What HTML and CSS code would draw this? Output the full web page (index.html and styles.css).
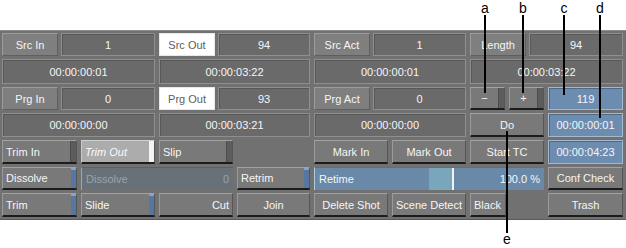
FILE: index.html
```html
<!DOCTYPE html>
<html>
<head>
<meta charset="utf-8">
<link rel="stylesheet" href="styles.css">
</head>
<body>
<div class="page">
  <div class="top-space"></div>
  <div class="panel">
    <!-- row 1 -->
    <div class="grp span2"><div class="lbl">Src In</div><div class="val">1</div></div>
    <div class="grp span2"><div class="lbl white">Src Out</div><div class="val">94</div></div>
    <div class="grp span2"><div class="lbl">Src Act</div><div class="val">1</div></div>
    <div class="grp span2"><div class="lbl">Length</div><div class="val">94</div></div>
    <!-- row 2 -->
    <div class="val span2">00:00:00:01</div>
    <div class="val span2">00:00:03:22</div>
    <div class="val span2">00:00:00:01</div>
    <div class="val span2">00:00:03:22</div>
    <!-- row 3 -->
    <div class="grp span2"><div class="lbl">Prg In</div><div class="val">0</div></div>
    <div class="grp span2"><div class="lbl white">Prg Out</div><div class="val">93</div></div>
    <div class="grp span2"><div class="lbl">Prg Act</div><div class="val">0</div></div>
    <div class="pair">
      <div class="btn center"><span class="txt">−</span><span class="strip dark"></span></div>
      <div class="btn center"><span class="txt">+</span><span class="strip dark"></span></div>
    </div>
    <div class="blue">119</div>
    <!-- row 4 -->
    <div class="val span2">00:00:00:00</div>
    <div class="val span2">00:00:03:21</div>
    <div class="val span2">00:00:00:00</div>
    <div class="btn center"><span class="txt">Do</span></div>
    <div class="blue">00:00:00:01</div>
    <!-- row 5 -->
    <div class="btn"><span class="txt">Trim In</span><span class="strip dark"></span></div>
    <div class="btn active"><span class="txt">Trim Out</span><span class="strip white"></span></div>
    <div class="btn"><span class="txt">Slip</span><span class="strip dark"></span></div>
    <div class="empty"></div>
    <div class="btn center"><span class="txt">Mark In</span></div>
    <div class="btn center"><span class="txt">Mark Out</span></div>
    <div class="btn center"><span class="txt">Start TC</span></div>
    <div class="blue">00:00:04:23</div>
    <!-- row 6 -->
    <div class="btn"><span class="txt">Dissolve</span><span class="strip blue-s"></span></div>
    <div class="slider disabled span2"><span class="s-lbl">Dissolve</span><span class="s-val">0</span></div>
    <div class="btn"><span class="txt">Retrim</span><span class="strip blue-s"></span></div>
    <div class="slider retime span3"><span class="s-lbl">Retime</span><span class="fill"></span><span class="s-val">100.0 %</span></div>
    <div class="btn center"><span class="txt">Conf Check</span></div>
    <!-- row 7 -->
    <div class="btn"><span class="txt">Trim</span><span class="strip blue-s"></span></div>
    <div class="btn"><span class="txt">Slide</span><span class="strip blue-s"></span></div>
    <div class="btn right"><span class="txt">Cut</span></div>
    <div class="btn center"><span class="txt">Join</span></div>
    <div class="btn center"><span class="txt">Delete Shot</span></div>
    <div class="btn center"><span class="txt">Scene Detect</span><span class="strip blue-s"></span></div>
    <div class="pair"><div class="btn"><span class="txt">Black</span></div><div class="empty"></div></div>
    <div class="btn center"><span class="txt">Trash</span></div>
  </div>

  <div class="callout ca"><span class="letter">a</span><span class="line"></span></div>
  <div class="callout cb"><span class="letter">b</span><span class="line"></span></div>
  <div class="callout cc"><span class="letter">c</span><span class="line"></span></div>
  <div class="callout cd"><span class="letter">d</span><span class="line"></span></div>
  <div class="callout ce"><span class="line"></span><span class="letter">e</span></div>
</div>
</body>
</html>
```
FILE: styles.css
```css
html, body {
  margin: 0;
  padding: 0;
  background: #ffffff;
}
.page {
  position: relative;
  width: 626px;
  height: 248px;
  font-family: "Liberation Sans", Arial, sans-serif;
  font-size: 11px;
  color: #f6f6f6;
}
.top-space {
  height: 30px;
}
.panel {
  box-sizing: border-box;
  width: 626px;
  height: 190px;
  background: #717171;
  border-top: 1px solid #8c8c8c;
  border-bottom: 1px solid #5a5a5a;
  padding: 2px 0 0 2px;
  display: grid;
  grid-template-columns: 75px 74px 74px 73px 74px 74px 74px 75px;
  grid-template-rows: 23px 25px 23px 24px 24px 23px 24px;
  column-gap: 4px;
  row-gap: 3px;
}
.span2 { grid-column: span 2; }
.span3 { grid-column: span 3; }

.grp {
  display: flex;
  gap: 3px;
}
.pair {
  display: flex;
  gap: 4px;
}
.pair > * {
  flex: 1;
}
.lbl, .val, .blue {
  box-sizing: border-box;
  display: flex;
  align-items: center;
  justify-content: center;
  white-space: nowrap;
}
.lbl {
  width: 56px;
  flex: none;
  background: #7f7f7f;
  border: 1px solid;
  border-color: #9c9c9c #5f5f5f #5f5f5f #9c9c9c;
}
.lbl.white {
  background: #ffffff;
  color: #5e5e5e;
  border-color: #e8e8e8;
}
.val {
  flex: 1;
  background: #6a6a6a;
  border: 1px solid #8f8f8f;
  box-shadow: inset 1px 1px 0 #585858;
}
.blue {
  background: #6d8db0;
  border: 1px solid #a3b8cd;
  box-shadow: inset 1px 1px 0 #4d6a8a;
}

.btn {
  box-sizing: border-box;
  display: flex;
  align-items: stretch;
  background: #797979;
  border-top: 1px solid #a2a2a2;
  border-left: 1px solid #9a9a9a;
  border-right: 1px solid #555555;
  border-bottom: 2px solid #1c1c1c;
  white-space: nowrap;
  overflow: hidden;
}
.btn .txt {
  flex: 1;
  display: flex;
  align-items: center;
  padding: 0 3px;
}
.btn.center .txt { justify-content: center; }
.btn.right .txt { justify-content: flex-end; }
.btn .strip {
  width: 5px;
  flex: none;
}
.strip.dark {
  background: #5c5c5c;
  border-left: 1px solid #4c4c4c;
}
.strip.white {
  background: #f4f4f4;
}
.strip.blue-s {
  background: #5677a2;
  border-top: 2px solid #8aa4c4;
}
.btn.active {
  background: #acacac;
  border-top-color: #d0d0d0;
  border-left-color: #c8c8c8;
}
.btn.active .txt {
  font-style: italic;
  color: #fafafa;
}

.slider {
  box-sizing: border-box;
  position: relative;
  display: flex;
  align-items: center;
  justify-content: space-between;
  padding: 0 4px;
  white-space: nowrap;
}
.slider.disabled {
  background: #687078;
  border-left: 1px solid #a0a6ac;
  border-top: 1px solid #5a6068;
  color: #9ba2aa;
}
.slider.retime {
  background: #6a89a8;
  border-left: 1px solid #b5c8d8;
  border-top: 1px solid #55718f;
}
.slider .fill {
  position: absolute;
  left: 114px;
  top: 0;
  width: 23px;
  height: 100%;
  background: #78a6bb;
  border-right: 2px solid #f0f4f6;
}
.slider .s-lbl, .slider .s-val {
  position: relative;
}

.callout {
  position: absolute;
  display: flex;
  flex-direction: column;
  align-items: center;
  width: 16px;
  color: #000000;
  font-family: "Liberation Sans", Arial, sans-serif;
  font-size: 14px;
}
.callout .letter {
  line-height: 17px;
  height: 17px;
}
.callout .line {
  width: 2px;
  background: #000000;
}
.ca { left: 477px; top: 0; }
.ca .line { height: 78px; margin-top: -2px; }
.cb { left: 515px; top: 0; }
.cb .line { height: 78px; margin-top: -2px; }
.cc { left: 556px; top: 0; }
.cc .line { height: 80px; margin-top: -2px; }
.cd { left: 592px; top: 0; }
.cd .line { height: 103px; margin-top: -2px; }
.ce { left: 499px; top: 131px; }
.ce .line { height: 102px; }
.ce .letter { margin-top: -2px; }
```
